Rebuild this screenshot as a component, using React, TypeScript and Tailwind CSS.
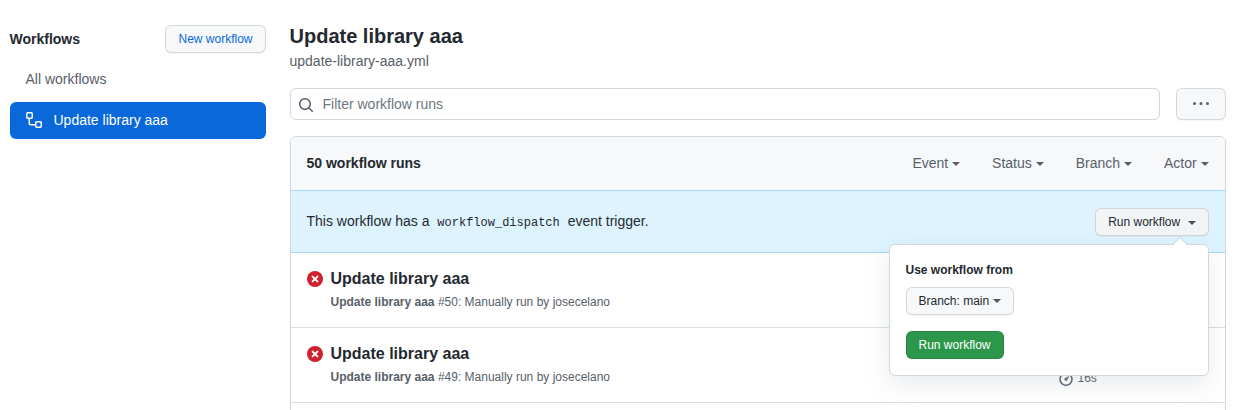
import type { ReactNode } from "react";

function Icon({ d, className = "" }: { d: string; className?: string }) {
  return (
    <svg viewBox="0 0 16 16" width="16" height="16" fill="currentColor" aria-hidden="true" className={`block shrink-0 ${className}`}>
      <path fillRule="evenodd" d={d} />
    </svg>
  );
}

const WORKFLOW =
  "M0 1.75C0 .784.784 0 1.75 0h3.5C6.216 0 7 .784 7 1.75v3.5A1.75 1.75 0 015.25 7H4v4a1 1 0 001 1h4v-1.25C9 9.784 9.784 9 10.75 9h3.5c.966 0 1.75.784 1.75 1.75v3.5A1.75 1.75 0 0114.25 16h-3.5A1.75 1.75 0 019 14.25v-.75H5A2.5 2.5 0 012.5 11V7h-.75A1.75 1.75 0 010 5.25v-3.5zm1.75-.25a.25.25 0 00-.25.25v3.5c0 .138.112.25.25.25h3.5a.25.25 0 00.25-.25v-3.5a.25.25 0 00-.25-.25h-3.5zm9 9a.25.25 0 00-.25.25v3.5c0 .138.112.25.25.25h3.5a.25.25 0 00.25-.25v-3.5a.25.25 0 00-.25-.25h-3.5z";
const SEARCH =
  "M11.5 7a4.499 4.499 0 11-8.998 0A4.499 4.499 0 0111.5 7zm-.82 4.74a6 6 0 111.06-1.06l3.04 3.04a.75.75 0 11-1.06 1.06l-3.04-3.04z";
const KEBAB = "M8 9a1.5 1.5 0 100-3 1.5 1.5 0 000 3zM1.5 9a1.5 1.5 0 100-3 1.5 1.5 0 000 3zm13 0a1.5 1.5 0 100-3 1.5 1.5 0 000 3z";
const STOPWATCH =
  "M5.75.75A.75.75 0 016.5 0h3a.75.75 0 010 1.5h-.75v1l-.001.041a6.718 6.718 0 013.464 1.435l.007-.006.75-.75a.75.75 0 111.06 1.06l-.75.75-.006.007a6.75 6.75 0 11-10.548 0L2.72 5.03l-.75-.75a.75.75 0 011.06-1.06l.75.75.007.006A6.718 6.718 0 017.25 2.541a.756.756 0 010-.041v-1H6.5a.75.75 0 01-.75-.75zM8 14.5A5.25 5.25 0 108 4a5.25 5.25 0 000 10.5zm.389-6.7l1.33-1.33a.75.75 0 111.061 1.06L9.45 8.861A1.502 1.502 0 018 10.75a1.5 1.5 0 11.389-2.95z";

function FailedIcon() {
  return (
    <svg viewBox="0 0 16 16" width="16" height="16" aria-hidden="true" className="mt-[18px] block shrink-0">
      <circle cx="8" cy="8" r="8" fill="#cf222e" />
      <path d="M5.6 5.6l4.8 4.8M10.4 5.6l-4.8 4.8" stroke="white" strokeWidth="1.9" strokeLinecap="round" />
    </svg>
  );
}

function Caret({ className = "" }: { className?: string }) {
  return <span className={`inline-block border-4 border-b-0 border-transparent border-t-current align-middle ${className}`} />;
}

function SmallButton({ className, children }: { className: string; children: ReactNode }) {
  return (
    <button className={`h-7 rounded-md border px-3 text-xs leading-5 font-medium whitespace-nowrap shadow-[0_1px_0_rgba(27,31,36,0.04)] ${className}`}>
      {children}
    </button>
  );
}

function RunRow({ number, duration }: { number: number; duration: string }) {
  return (
    <div className="flex h-[75px] items-start border-b border-[#d8dee4] px-4">
      <FailedIcon />
      <div className="ml-2 flex-1 pt-3.5">
        <h2 className="text-base leading-6 font-semibold">Update library aaa</h2>
        <p className="mt-0.5 text-xs leading-[18px] text-[#57606a]">
          <span className="font-semibold">Update library aaa</span> #{number}: Manually run by josecelano
        </p>
      </div>
      <div className="flex w-[151px] items-center gap-1 pt-[42px] text-xs leading-4 text-[#57606a]">
        <Icon d={STOPWATCH} />
        <span>{duration}</span>
      </div>
    </div>
  );
}

function RunPopover() {
  return (
    <div className="absolute top-9 right-0 z-10 flex h-[132px] w-80 flex-col items-start rounded-md border border-[#d0d7de] bg-white p-4 shadow-[0_8px_24px_rgba(140,149,159,0.2)]">
      <span className="absolute -top-4 right-5 border-8 border-transparent border-b-[rgba(27,31,36,0.15)]" />
      <span className="absolute -top-3.5 right-[21px] border-7 border-transparent border-b-white" />
      <p className="text-xs leading-[18px] font-semibold">Use workflow from</p>
      <SmallButton className="mt-2 border-[#1b1f24]/15 bg-[#f6f8fa]">
        Branch: main <Caret className="mb-0.5 opacity-80" />
      </SmallButton>
      <SmallButton className="mt-4 border-[#1b1f24]/15 bg-[#2c974b] text-white">Run workflow</SmallButton>
    </div>
  );
}

export default function App() {
  return (
    <div className="flex h-[410px] w-[1244px] overflow-hidden bg-white pr-[18.5px] pl-[9.5px] font-['Liberation_Sans',Arial,sans-serif] text-sm leading-[21px] text-[#24292f]">
      <aside className="w-64 shrink-0 pt-[25px]">
        <div className="flex h-7 items-center justify-between">
          <h2 className="font-semibold">Workflows</h2>
          <SmallButton className="border-[#1b1f24]/15 bg-[#f6f8fa] text-[#0969da]">New workflow</SmallButton>
        </div>
        <nav className="mt-2">
          <a className="flex h-[37px] items-center px-4 text-[#57606a]">All workflows</a>
          <a className="mt-1 flex h-[37px] items-center gap-3 rounded-md bg-[#0969da] px-4 text-white">
            <Icon d={WORKFLOW} className="mb-px" />
            Update library aaa
          </a>
        </nav>
      </aside>

      <main className="ml-6 flex-1 pt-[21px]">
        <h1 className="text-xl leading-[30px] font-semibold">Update library aaa</h1>
        <p className="text-[#57606a]">update-library-aaa.yml</p>

        <div className="mt-4 flex h-8 gap-4">
          <div className="flex flex-1 items-center gap-[9px] rounded-md border border-[#d0d7de] px-[7px] text-[#6e7781]">
            <Icon d={SEARCH} className="mt-0.5 text-[#57606a]" />
            Filter workflow runs
          </div>
          <button className="flex w-[50px] items-center justify-center rounded-md border border-[#1b1f24]/15 bg-[#f6f8fa] text-[#57606a] shadow-[0_1px_0_rgba(27,31,36,0.04)]">
            <Icon d={KEBAB} />
          </button>
        </div>

        <section className="mt-4 h-[400px] rounded-md border border-[#d0d7de]">
          <header className="flex h-[53px] items-center justify-between rounded-t-[5px] bg-[#f6f8fa] px-4">
            <h3 className="font-semibold">50 workflow runs</h3>
            <div className="flex gap-8 text-[#57606a]">
              <span>Event <Caret /></span>
              <span>Status <Caret /></span>
              <span>Branch <Caret /></span>
              <span>Actor <Caret /></span>
            </div>
          </header>

          <div className="flex h-[63px] items-start justify-between border-y border-[#54aeff]/40 bg-[#ddf4ff] px-4">
            <p className="pt-5">
              This workflow has a{" "}
              <code className="px-1 font-['Liberation_Mono',monospace] text-xs">workflow_dispatch</code>{" "}
              event trigger.
            </p>
            <div className="relative mt-[17px]">
              <SmallButton className="border-[#1b1f24]/15 bg-[#f3f4f6]">
                Run workflow <Caret className="ml-1 opacity-80" />
              </SmallButton>
              <RunPopover />
            </div>
          </div>

          <RunRow number={50} duration="16s" />
          <RunRow number={49} duration="16s" />
        </section>
      </main>
    </div>
  );
}
